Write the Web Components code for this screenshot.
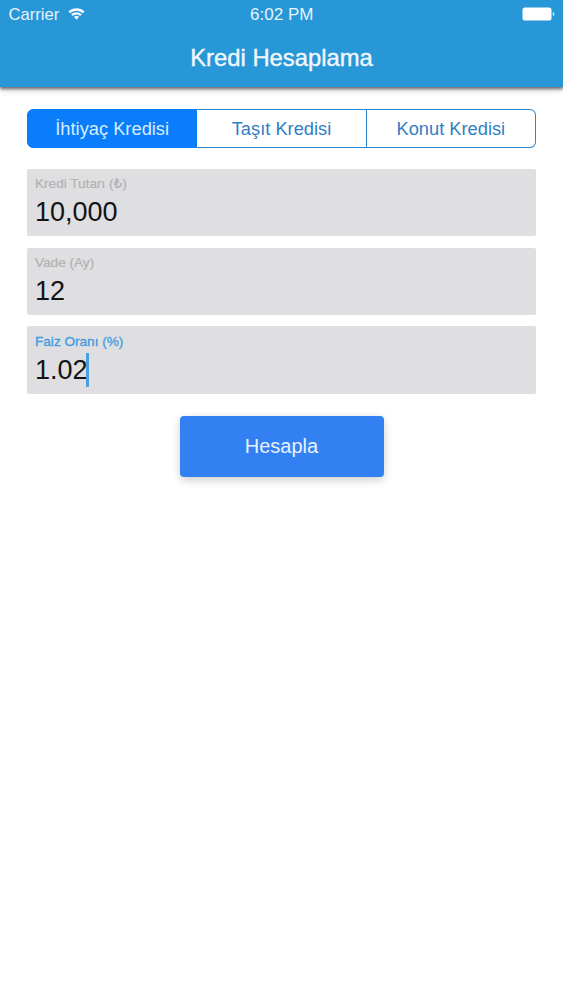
<!DOCTYPE html>
<html lang="tr">
<head>
<meta charset="utf-8">
<title>Kredi Hesaplama</title>
<style>
  html, body { margin: 0; background: #fff; }
  body { font-family: "Liberation Sans", Arial, sans-serif; }
</style>
</head>
<body>
<kredi-app></kredi-app>
<script>
function shadowOf(el, html) {
  el.attachShadow({ mode: 'open' }).innerHTML = html;
}

class StatusBar extends HTMLElement {
  constructor() {
    super();
    shadowOf(this, `
      <style>
        :host { display: grid; grid-template-columns: 1fr auto 1fr; align-items: center; height: 29px; padding: 0 8px 0 8.5px; color: #e6f4fc; font-size: 16.6px; }
        .left { display: flex; align-items: center; gap: 8.5px; }
        .time { font-size: 17px; }
        .right { display: flex; justify-content: flex-end; }
        svg { display: block; margin-bottom: 2px; }
      </style>
      <div class="left">
        <span>Carrier</span>
        <svg width="17" height="13" viewBox="0 0 16 12">
          <path d="M0.4 4.2A10.8 10.8 0 0 1 15.6 4.2L14 5.8A8.5 8.5 0 0 0 2 5.8Z" fill="#f6fbfe"/>
          <path d="M3 6.8A7.2 7.2 0 0 1 13 6.8L11.4 8.4A4.9 4.9 0 0 0 4.6 8.4Z" fill="#f6fbfe"/>
          <path d="M5.6 9.3A3.5 3.5 0 0 1 10.4 9.3L8 11.8Z" fill="#f6fbfe"/>
        </svg>
      </div>
      <span class="time">6:02 PM</span>
      <div class="right">
        <svg width="33" height="14" viewBox="0 0 33 14">
          <rect x="0.5" y="0.5" width="29" height="13" rx="2.5" fill="#fff"/>
          <path d="M30.8 5v4c1-.2 1.6-1 1.6-2s-.6-1.8-1.6-2Z" fill="#d5ecf8"/>
        </svg>
      </div>`);
  }
}
customElements.define('status-bar', StatusBar);

class NavHeader extends HTMLElement {
  constructor() {
    super();
    shadowOf(this, `
      <style>
        :host { display: block; background: #2797d7; height: 87px; box-shadow: 0 2px 3px rgba(40,40,40,.65), 0 4px 6px rgba(0,0,0,.12); position: relative; }
        h1 { margin: 0; height: 57px; display: flex; align-items: center; justify-content: center; color: #f0f8fd; font-size: 23.8px; font-weight: normal; -webkit-text-stroke: .4px #f0f8fd; }
      </style>
      <status-bar></status-bar>
      <h1><slot></slot></h1>`);
  }
}
customElements.define('nav-header', NavHeader);

class SegmentItem extends HTMLElement {
  constructor() {
    super();
    shadowOf(this, `
      <style>
        :host { display: flex; flex: 1 1 0; align-items: center; justify-content: center; box-sizing: border-box; color: #2f80c4; font-size: 18.3px; background: #fff; border: 1.5px solid #2b87cf; border-left-width: 0; }
        :host(:first-child) { border-left-width: 1.5px; border-radius: 6px 0 0 6px; }
        :host(:last-child) { border-radius: 0 6px 6px 0; }
        :host([selected]) { background: #0a7dfb; border-color: #0a7dfb; color: #d8ecff; }
      </style>
      <slot></slot>`);
  }
}
customElements.define('segment-item', SegmentItem);

class SegmentedControl extends HTMLElement {
  constructor() {
    super();
    shadowOf(this, `
      <style>
        :host { display: flex; height: 39px; }
      </style>
      <slot></slot>`);
  }
}
customElements.define('segmented-control', SegmentedControl);

class FloatField extends HTMLElement {
  constructor() {
    super();
    const focused = this.hasAttribute('focused');
    shadowOf(this, `
      <style>
        :host { display: block; height: 67.5px; box-sizing: border-box; padding: 8.25px 8px 0; background: #dfdee0; border-radius: 2px; }
        .label { display: block; height: 14px; line-height: 14px; font-size: 13.6px; color: #b2b1b4; -webkit-text-stroke: .2px #b2b1b4; }
        :host([focused]) .label { color: #3f9be0; -webkit-text-stroke: .3px #3f9be0; }
        .value { display: flex; align-items: center; height: 36px; margin-top: 3.75px; font-size: 27px; color: #131315; }
        .caret { width: 2.5px; height: 34px; background: #4a9fe0; margin-left: -1.5px; }
      </style>
      <span class="label">${this.getAttribute('label')}</span>
      <div class="value"><slot></slot>${focused ? '<span class="caret"></span>' : ''}</div>`);
  }
}
customElements.define('float-field', FloatField);

class PrimaryButton extends HTMLElement {
  constructor() {
    super();
    shadowOf(this, `
      <style>
        :host { display: flex; align-items: center; justify-content: center; width: 204px; height: 61px; background: #3380f2; border-radius: 4px; color: #e8f2ff; font-size: 20px; box-shadow: 0 3px 10px rgba(0,0,0,.2); }
      </style>
      <slot></slot>`);
  }
}
customElements.define('primary-button', PrimaryButton);

class KrediApp extends HTMLElement {
  constructor() {
    super();
    shadowOf(this, `
      <style>
        :host { display: block; height: 1000px; background: #fff; font-family: "Liberation Sans", Arial, "DejaVu Sans", sans-serif; }
        main { display: flex; flex-direction: column; padding: 22px 27px 0; }
        segmented-control { margin-bottom: 20.75px; }
        .fields { display: flex; flex-direction: column; gap: 11.25px; }
        .action { display: flex; justify-content: center; margin-top: 22.25px; }
      </style>
      <nav-header>Kredi Hesaplama</nav-header>
      <main>
        <segmented-control>
          <segment-item selected>İhtiyaç Kredisi</segment-item>
          <segment-item>Taşıt Kredisi</segment-item>
          <segment-item>Konut Kredisi</segment-item>
        </segmented-control>
        <div class="fields">
          <float-field label="Kredi Tutarı (₺)">10,000</float-field>
          <float-field label="Vade (Ay)">12</float-field>
          <float-field label="Faiz Oranı (%)" focused>1.02</float-field>
        </div>
        <div class="action"><primary-button>Hesapla</primary-button></div>
      </main>`);
  }
}
customElements.define('kredi-app', KrediApp);
</script>
</body>
</html>
